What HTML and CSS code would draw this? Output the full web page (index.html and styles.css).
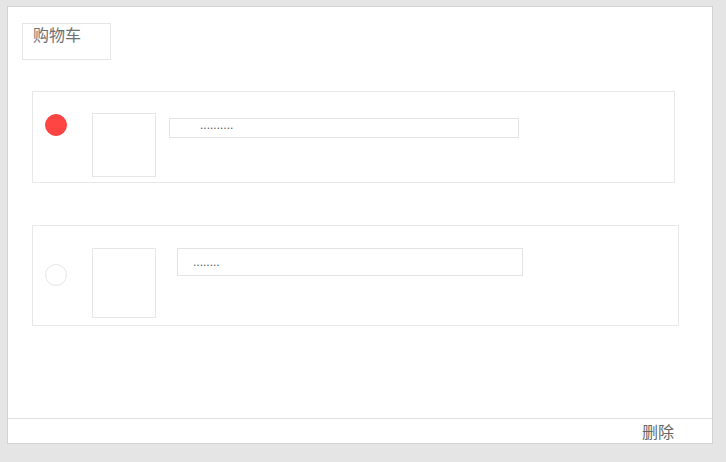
FILE: index.html
```html
<!DOCTYPE html>
<html>
<head>
<meta charset="utf-8">
<link rel="stylesheet" href="styles.css">
</head>
<body>
<div class="panel">
  <div class="title">购物车</div>
  <div class="item item-one">
    <div class="check checked"></div>
    <div class="thumb"></div>
    <div class="field"><span class="dots">..........</span></div>
  </div>
  <div class="item item-two">
    <div class="check"></div>
    <div class="thumb"></div>
    <div class="field"><span class="dots">........</span></div>
  </div>
  <div class="spacer"></div>
  <div class="footer"><span class="delete">删除</span></div>
</div>
</body>
</html>
```
FILE: styles.css
```css
html, body {
  margin: 0;
  padding: 0;
  background: #e5e5e5;
  font-family: "Noto Sans CJK SC", "Liberation Sans", sans-serif;
}
body {
  padding: 6px 0 0 7px;
}
.panel {
  width: 704px;
  height: 436px;
  background: #fff;
  border: 1px solid #d2d2d2;
  display: flex;
  flex-direction: column;
  box-sizing: content-box;
}
.title {
  margin: 16px 0 0 14px;
  width: 89px;
  height: 37px;
  box-sizing: border-box;
  border: 1px solid #e6e6e6;
  padding: 0 0 0 10px;
  font-size: 16px;
  line-height: 20px;
  color: #707070;
}
.item {
  display: flex;
  align-items: flex-start;
  margin-left: 24px;
  border: 1px solid #e8e8e8;
  box-sizing: border-box;
  padding-left: 12px;
}
.item-one {
  margin-top: 31px;
  width: 643px;
  height: 92px;
}
.item-two {
  margin-top: 42px;
  width: 647px;
  height: 101px;
}
.check {
  width: 22px;
  height: 22px;
  border-radius: 50%;
  box-sizing: border-box;
  border: 1px solid #e6e6e6;
  flex: none;
}
.check.checked {
  background: #ff4444;
  border-color: #ff4444;
}
.item-one .check { margin-top: 22px; }
.item-two .check { margin-top: 38px; }
.thumb {
  flex: none;
  width: 64px;
  margin-left: 25px;
  box-sizing: border-box;
  border: 1px solid #e6e6e6;
}
.item-one .thumb { margin-top: 21px; height: 64px; }
.item-two .thumb { margin-top: 22px; height: 70px; }
.field {
  flex: none;
  box-sizing: border-box;
  border: 1px solid #e3e3e3;
  font-family: "Liberation Sans", sans-serif;
  font-size: 12px;
  color: #555;
}
.item-one .field {
  margin: 26px 0 0 13px;
  width: 350px;
  height: 20px;
  padding-left: 30px;
  line-height: 12px;
}
.item-two .field {
  margin: 22px 0 0 21px;
  width: 346px;
  height: 28px;
  padding-left: 15px;
  padding-top: 7px;
  line-height: 12px;
}
.spacer { flex: 1; }
.footer {
  height: 24px;
  border-top: 1px solid #e0e0e0;
  display: flex;
  justify-content: flex-end;
  align-items: center;
  padding-right: 38px;
}
.delete {
  font-size: 16px;
  line-height: 20px;
  color: #666;
}
```
